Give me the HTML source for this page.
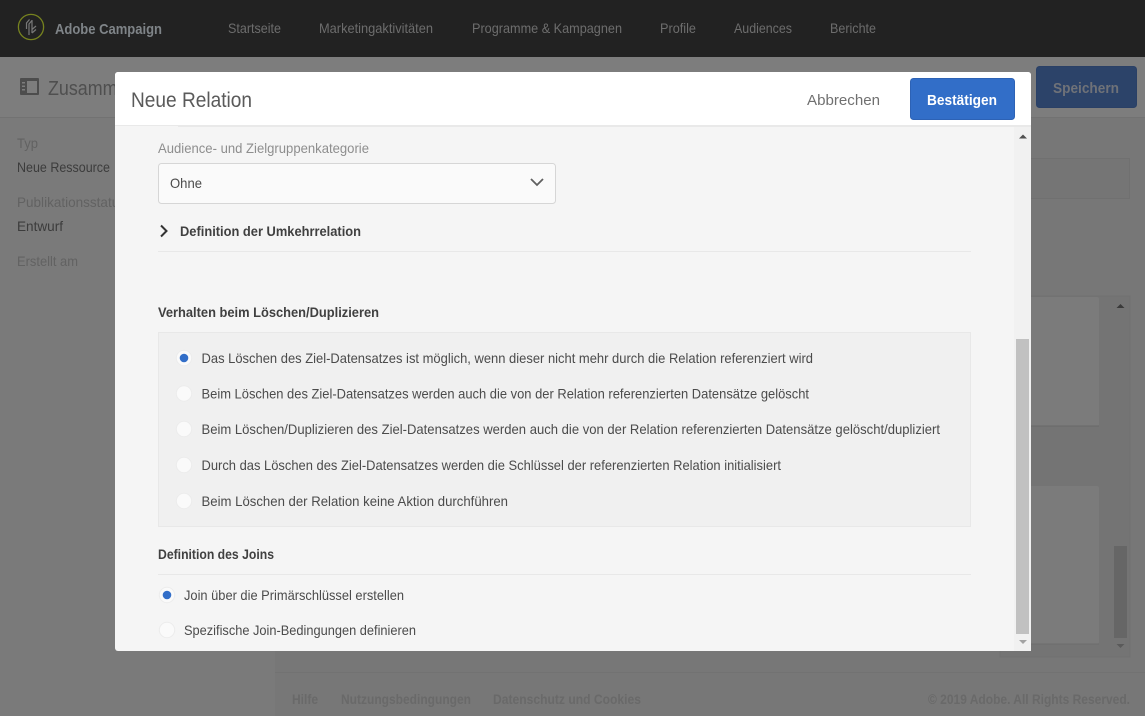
<!DOCTYPE html>
<html lang="de"><head><meta charset="utf-8"><title>Neue Relation</title>
<style>
html,body{margin:0;padding:0;width:1145px;height:716px;overflow:hidden;background:#787878}
svg{display:block;overflow:hidden;font-family:"Liberation Sans",sans-serif}
</style></head><body>
<svg width="1145" height="716" viewBox="0 0 1145 716" xmlns="http://www.w3.org/2000/svg">
<rect width="1145" height="716" fill="#777777"/>
<rect y="57" width="1145" height="60" fill="#7d7d7d"/>
<rect y="118" width="275" height="598" fill="#7a7a7a"/>
<rect y="117" width="1145" height="1" fill="#727272"/>
<rect width="1145" height="57" fill="#222222"/>
<!-- logo -->
<circle cx="31" cy="27" r="12.6" fill="none" stroke="#77831f" stroke-width="1.3"/>
<g fill="none" stroke="#787878" stroke-width="1.2"><path d="M26.500 29v-6l3-3.500M29 35V24l3-3.500M32 20v13M32 33l4-3.500M32 29.500l4-3.500"/></g>
<g font-size="14" fill="#6d6d6d">
<text x="55" y="34" font-size="15" font-weight="bold" fill="#7f8488" textLength="107" lengthAdjust="spacingAndGlyphs">Adobe Campaign</text>
<text x="228" y="33" textLength="53" lengthAdjust="spacingAndGlyphs">Startseite</text>
<text x="319" y="33" textLength="114" lengthAdjust="spacingAndGlyphs">Marketingaktivitäten</text>
<text x="472" y="33" textLength="150" lengthAdjust="spacingAndGlyphs">Programme &amp; Kampagnen</text>
<text x="660" y="33" textLength="36" lengthAdjust="spacingAndGlyphs">Profile</text>
<text x="734" y="33" textLength="58" lengthAdjust="spacingAndGlyphs">Audiences</text>
<text x="830" y="33" textLength="46" lengthAdjust="spacingAndGlyphs">Berichte</text>
</g>
<!-- background toolbar -->
<rect x="20" y="78" width="19" height="17" rx="1" fill="#4d4d4d"/>
<rect x="27" y="81" width="10" height="12" fill="#7d7d7d"/>
<rect x="22" y="82" width="3" height="1.500" fill="#7d7d7d"/><rect x="22" y="85.500" width="3" height="1.500" fill="#7d7d7d"/><rect x="22" y="89" width="3" height="1.500" fill="#7d7d7d"/>
<text x="48" y="95" font-size="20" fill="#4f4f4f" textLength="152" lengthAdjust="spacingAndGlyphs">Zusammenfassung</text>
<rect x="1036.500" y="66.500" width="100" height="41" rx="3" fill="#2c4369" stroke="#2a4066"/>
<text x="1053" y="93" font-size="15" font-weight="bold" fill="#6f7278" textLength="66" lengthAdjust="spacingAndGlyphs">Speichern</text>
<g font-size="14">
<text x="17" y="148" fill="#626262" textLength="21" lengthAdjust="spacingAndGlyphs">Typ</text>
<text x="17" y="172" fill="#3c3c3c" textLength="93" lengthAdjust="spacingAndGlyphs">Neue Ressource</text>
<text x="17" y="207" fill="#626262" textLength="109" lengthAdjust="spacingAndGlyphs">Publikationsstatus</text>
<text x="17" y="231" fill="#3c3c3c" textLength="46" lengthAdjust="spacingAndGlyphs">Entwurf</text>
<text x="17" y="266" fill="#626262" textLength="61" lengthAdjust="spacingAndGlyphs">Erstellt am</text>
</g>
<!-- background panels -->
<rect x="1000.500" y="158.500" width="129" height="40" fill="#757575" stroke="#707070"/>
<rect x="1000" y="296" width="130" height="361" fill="#747474" stroke="#707070"/>
<rect x="1000" y="297" width="99" height="129.500" rx="2" fill="#7b7b7b"/>
<rect x="1000" y="425.500" width="99" height="1" fill="#686868"/>
<rect x="1000" y="486" width="99" height="158" rx="2" fill="#7b7b7b"/>
<rect x="1000" y="643.500" width="99" height="1" fill="#6c6c6c"/>
<rect x="1114" y="546" width="13" height="92" fill="#666666"/>
<path d="M1116.500 308h8l-4-4z" fill="#3a3a3a"/>
<path d="M1116.500 644h8l-4 4z" fill="#5a5a5a"/>
<rect x="275" y="672" width="870" height="1" fill="#727272"/>
<g font-size="14" font-weight="bold" fill="#696969">
<text x="292" y="704" textLength="26" lengthAdjust="spacingAndGlyphs">Hilfe</text>
<text x="341" y="704" textLength="130" lengthAdjust="spacingAndGlyphs">Nutzungsbedingungen</text>
<text x="493" y="704" textLength="148" lengthAdjust="spacingAndGlyphs">Datenschutz und Cookies</text>
<text x="928" y="704" textLength="202" lengthAdjust="spacingAndGlyphs">© 2019 Adobe. All Rights Reserved.</text>
</g>
<!-- modal -->
<rect x="115" y="72" width="916" height="579" rx="3" fill="#f5f5f5"/>
<path d="M115 125V75a3 3 0 0 1 3-3h910a3 3 0 0 1 3 3v50z" fill="#ffffff"/>
<rect x="115" y="125" width="916" height="2" fill="#e9e9e9"/>
<rect x="115" y="126" width="63" height="1" fill="#f5f5f5"/>
<rect x="1014" y="127" width="17" height="524" fill="#f1f1f1"/>
<rect x="1016" y="339" width="13" height="295" fill="#c1c1c1"/>
<path d="M1019 138.500h8l-4-4z" fill="#505050"/>
<path d="M1019 640h8l-4 4z" fill="#a3a3a3"/>
<text x="131" y="107" font-size="21" fill="#5a5a5a" textLength="121" lengthAdjust="spacingAndGlyphs">Neue Relation</text>
<text x="807" y="105" font-size="15" fill="#707070" textLength="73" lengthAdjust="spacingAndGlyphs">Abbrechen</text>
<rect x="910.500" y="78.500" width="104" height="41" rx="3" fill="#326ec8" stroke="#2d62b5"/>
<text x="927" y="105" font-size="15" font-weight="bold" fill="#ffffff" textLength="70" lengthAdjust="spacingAndGlyphs">Bestätigen</text>
<g font-size="14">
<text x="158" y="153" fill="#8e8e8e" textLength="211" lengthAdjust="spacingAndGlyphs">Audience- und Zielgruppenkategorie</text>
<rect x="158.500" y="163.500" width="397" height="40" rx="3" fill="#fafafa" stroke="#d6d6d6"/>
<text x="170" y="188" fill="#4b4b4b" textLength="32" lengthAdjust="spacingAndGlyphs">Ohne</text>
<path d="M531 179l6 6 6-6" fill="none" stroke="#606060" stroke-width="1.800"/>
<path d="M161 225.500l5.500 5.500-5.500 5.500" fill="none" stroke="#333" stroke-width="2"/>
<text x="180" y="236" font-weight="bold" fill="#404040" textLength="181" lengthAdjust="spacingAndGlyphs">Definition der Umkehrrelation</text>
<rect x="158" y="251" width="813" height="1" fill="#e8e8e8"/>
<text x="158" y="317" font-weight="bold" fill="#404040" textLength="221" lengthAdjust="spacingAndGlyphs">Verhalten beim Löschen/Duplizieren</text>
<rect x="158.500" y="332.500" width="812" height="194" fill="#f0f0f0" stroke="#e8e8e8"/>
<g fill="#fafafa" stroke="#ececec">
<circle cx="184" cy="358" r="7.700"/><circle cx="184" cy="393.500" r="7.700"/><circle cx="184" cy="429" r="7.700"/><circle cx="184" cy="465" r="7.700"/><circle cx="184" cy="501" r="7.700"/>
<circle cx="167" cy="595" r="7.700"/><circle cx="167" cy="630" r="7.700"/>
</g>
<circle cx="184" cy="358" r="4.300" fill="#326ec8"/>
<circle cx="167" cy="595" r="4.300" fill="#326ec8"/>
<g fill="#4b4b4b">
<text x="201.500" y="363" textLength="611.500" lengthAdjust="spacingAndGlyphs">Das Löschen des Ziel-Datensatzes ist möglich, wenn dieser nicht mehr durch die Relation referenziert wird</text>
<text x="201.500" y="398.500" textLength="607.500" lengthAdjust="spacingAndGlyphs">Beim Löschen des Ziel-Datensatzes werden auch die von der Relation referenzierten Datensätze gelöscht</text>
<text x="201.500" y="434" textLength="738.500" lengthAdjust="spacingAndGlyphs">Beim Löschen/Duplizieren des Ziel-Datensatzes werden auch die von der Relation referenzierten Datensätze gelöscht/dupliziert</text>
<text x="201.500" y="470" textLength="579.500" lengthAdjust="spacingAndGlyphs">Durch das Löschen des Ziel-Datensatzes werden die Schlüssel der referenzierten Relation initialisiert</text>
<text x="201.500" y="506" textLength="306.500" lengthAdjust="spacingAndGlyphs">Beim Löschen der Relation keine Aktion durchführen</text>
<text x="184" y="600" textLength="220" lengthAdjust="spacingAndGlyphs">Join über die Primärschlüssel erstellen</text>
<text x="184" y="635" textLength="232" lengthAdjust="spacingAndGlyphs">Spezifische Join-Bedingungen definieren</text>
</g>
<text x="158" y="559" font-weight="bold" fill="#404040" textLength="116" lengthAdjust="spacingAndGlyphs">Definition des Joins</text>
<rect x="158" y="574" width="813" height="1" fill="#e8e8e8"/>
</g>
</svg>
</body></html>
